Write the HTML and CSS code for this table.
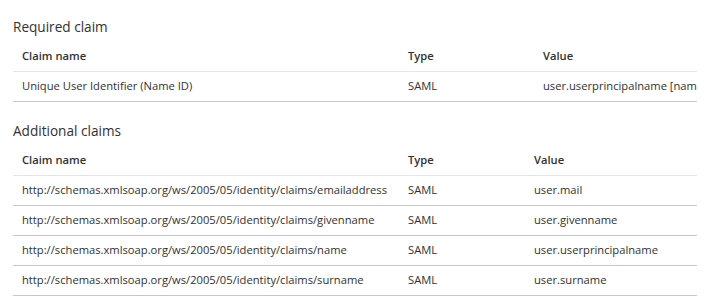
FILE: index.html
```html
<!DOCTYPE html>
<html lang="en">
<head>
  <meta charset="UTF-8">
  <title>User Attributes &amp; Claims</title>
  <link rel="stylesheet" href="styles.css">
</head>
<body>
  <div class="claims">
    <h2 class="section-title">Required claim</h2>
    <table class="claim-table required">
      <colgroup>
        <col class="col-name">
        <col class="col-type">
        <col>
      </colgroup>
      <thead>
        <tr>
          <th>Claim name</th>
          <th>Type</th>
          <th>Value</th>
        </tr>
      </thead>
      <tbody>
        <tr>
          <td>Unique User Identifier (Name ID)</td>
          <td>SAML</td>
          <td>user.userprincipalname [nameid-format:emailAddress]</td>
        </tr>
      </tbody>
    </table>

    <h2 class="section-title">Additional claims</h2>
    <table class="claim-table additional">
      <colgroup>
        <col class="col-name">
        <col class="col-type">
        <col>
      </colgroup>
      <thead>
        <tr>
          <th>Claim name</th>
          <th>Type</th>
          <th>Value</th>
        </tr>
      </thead>
      <tbody>
        <tr>
          <td>http://schemas.xmlsoap.org/ws/2005/05/identity/claims/emailaddress</td>
          <td>SAML</td>
          <td>user.mail</td>
        </tr>
        <tr>
          <td>http://schemas.xmlsoap.org/ws/2005/05/identity/claims/givenname</td>
          <td>SAML</td>
          <td>user.givenname</td>
        </tr>
        <tr>
          <td>http://schemas.xmlsoap.org/ws/2005/05/identity/claims/name</td>
          <td>SAML</td>
          <td>user.userprincipalname</td>
        </tr>
        <tr>
          <td>http://schemas.xmlsoap.org/ws/2005/05/identity/claims/surname</td>
          <td>SAML</td>
          <td>user.surname</td>
        </tr>
      </tbody>
    </table>
  </div>
</body>
</html>
```

FILE: styles.css
```css
body {
  margin: 0;
  background: #ffffff;
  color: #323130;
  font-family: "Open Sans", "Noto Sans", sans-serif;
  font-size: 11.2px;
}
.claims {
  padding: 17px 0 0 13px;
  width: 684px;
}
.section-title {
  margin: 0 0 5px;
  font-size: 13.6px;
  font-weight: 400;
  line-height: 20px;
}
.claim-table + .section-title {
  margin-top: 19px;
}
.claim-table {
  width: 684px;
  table-layout: fixed;
  border-collapse: collapse;
}
.col-name {
  width: 386px;
}
.required .col-type {
  width: 135px;
}
.additional .col-type {
  width: 126px;
}
th, td {
  padding: 6px 9px 7px;
  height: 16px;
  line-height: 16px;
  text-align: left;
  white-space: nowrap;
  overflow: hidden;
  text-overflow: clip;
}
th:last-child, td:last-child {
  padding-right: 0;
}
th {
  font-weight: 600;
  border-bottom: 1px solid #e8e6e4;
}
td {
  border-bottom: 1px solid #c8c6c4;
}
```
